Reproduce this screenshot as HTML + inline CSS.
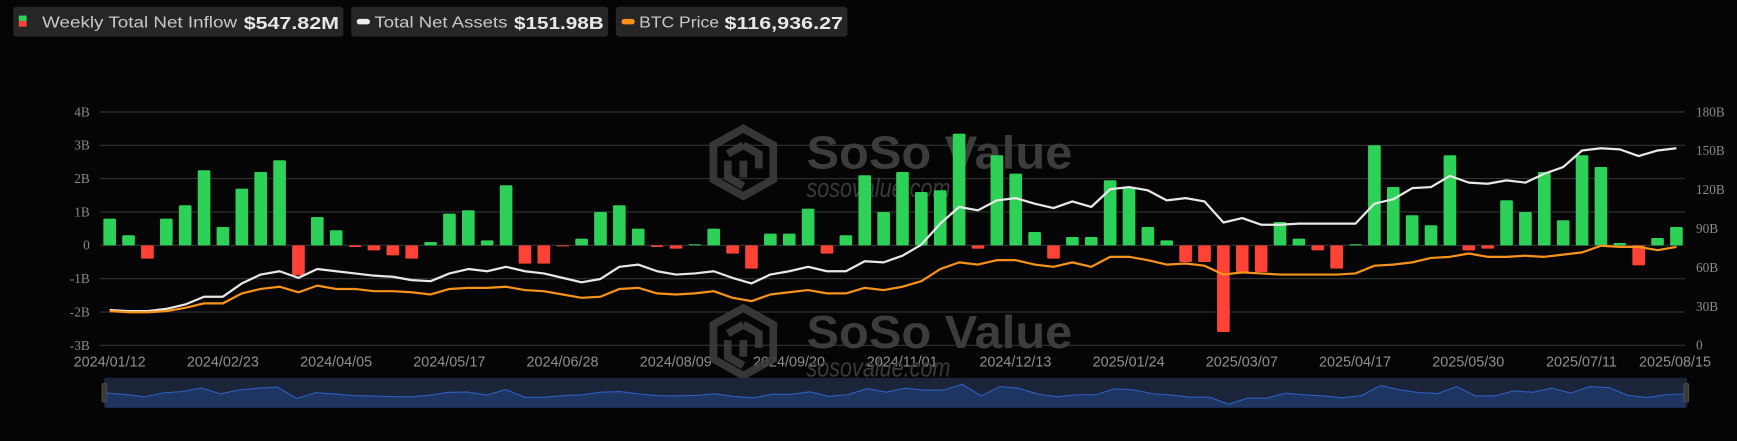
<!DOCTYPE html>
<html><head><meta charset="utf-8"><style>
html,body{margin:0;padding:0;background:#050505;width:1737px;height:441px;overflow:hidden}
svg{display:block}
</style></head><body>
<svg id="s" width="1737" height="441" viewBox="0 0 1568 398" xmlns="http://www.w3.org/2000/svg" font-family="Liberation Sans, sans-serif">
<rect width="1568" height="398" fill="#050505"/>
<rect x="12" y="6" width="298" height="27" rx="3" fill="#262626"/>
<rect x="17" y="14" width="7" height="5" fill="#2ed158"/><rect x="17" y="19" width="7" height="5" fill="#ff4236"/>
<text x="38" y="25" font-size="14" fill="#c8c8c8" textLength="176" lengthAdjust="spacingAndGlyphs">Weekly Total Net Inflow</text>
<text x="220" y="26" font-size="16" font-weight="bold" fill="#e8e8e8" textLength="86" lengthAdjust="spacingAndGlyphs">$547.82M</text>
<rect x="317" y="6" width="232" height="27" rx="3" fill="#262626"/>
<rect x="322" y="17" width="12" height="5" rx="2.5" fill="#eeeeee"/>
<text x="338" y="25" font-size="14" fill="#c8c8c8" textLength="120" lengthAdjust="spacingAndGlyphs">Total Net Assets</text>
<text x="464" y="26" font-size="16" font-weight="bold" fill="#e8e8e8" textLength="81" lengthAdjust="spacingAndGlyphs">$151.98B</text>
<rect x="556" y="6" width="209" height="27" rx="3" fill="#262626"/>
<rect x="561" y="17" width="12" height="5" rx="2.5" fill="#f7931a"/>
<text x="577" y="25" font-size="14" fill="#c8c8c8" textLength="72" lengthAdjust="spacingAndGlyphs">BTC Price</text>
<text x="654" y="26" font-size="16" font-weight="bold" fill="#e8e8e8" textLength="107" lengthAdjust="spacingAndGlyphs">$116,936.27</text>
<g id="grid"></g>
<g fill="none" stroke="#3c3c3c" stroke-width="7" opacity="0.9">
<path d="M671 116 L698 131 L698 162 L671 177 L644 162 L644 131 Z"/>
<path d="M671 131 L685 139 L685 152 M657 139 L671 131 M657 145 L657 160 L671 168 M671 145 L671 160"/>
<path d="M671 278 L698 293 L698 324 L671 339 L644 324 L644 293 Z"/>
<path d="M671 293 L685 301 L685 314 M657 301 L671 293 M657 307 L657 322 L671 330 M671 307 L671 322"/>
</g>
<text x="728" y="152" font-size="42" font-weight="bold" fill="#3c3c3c" textLength="240" lengthAdjust="spacingAndGlyphs">SoSo Value</text>
<text x="728" y="178" font-size="24" font-style="italic" fill="#3a3a3a" textLength="130" lengthAdjust="spacingAndGlyphs">sosovalue.com</text>
<text x="728" y="314" font-size="42" font-weight="bold" fill="#3c3c3c" textLength="240" lengthAdjust="spacingAndGlyphs">SoSo Value</text>
<text x="728" y="340" font-size="24" font-style="italic" fill="#3a3a3a" textLength="130" lengthAdjust="spacingAndGlyphs">sosovalue.com</text>
<g id="bars"></g>
<g id="lines"></g>
<rect x="94" y="341" width="1429" height="27" fill="#1b2438"/>
<g id="mini"></g>
<rect x="92" y="346" width="4.5" height="17" rx="1.5" fill="#3a3a3a" stroke="#555" stroke-width="0.6"/>
<rect x="1520" y="346" width="4.5" height="17" rx="1.5" fill="#3a3a3a" stroke="#555" stroke-width="0.6"/>
</svg>
<script>
const NS="http://www.w3.org/2000/svg";
function el(t,a,p,txt){const e=document.createElementNS(NS,t);for(const k in a)e.setAttribute(k,a[k]);if(txt!==undefined)e.textContent=txt;document.getElementById(p).appendChild(e);return e;}
const L=["4B","3B","2B","1B","0","-1B","-2B","-3B"],R=["180B","150B","120B","90B","60B","30B","0"];
for(let i=0;i<8;i++){const y=101+30.1*i;el("line",{x1:90,x2:1521,y1:y,y2:y,stroke:"#353535",'stroke-width':1},"grid");
el("text",{x:81,y:y+4,'font-size':12,fill:"#8a8a8a",'text-anchor':"end",'font-family':"Liberation Serif, serif"},"grid",L[i]);}
for(let i=0;i<7;i++){const y=101+35.1*i;el("text",{x:1531,y:y+4,'font-size':12,fill:"#8a8a8a",'font-family':"Liberation Serif, serif"},"grid",R[i]);}
const D=["2024/01/12","2024/02/23","2024/04/05","2024/05/17","2024/06/28","2024/08/09","2024/09/20","2024/11/01","2024/12/13","2025/01/24","2025/03/07","2025/04/17","2025/05/30","2025/07/11"];
D.forEach((d,i)=>el("text",{x:99+102.2*i,y:331,'font-size':13,fill:"#8f8f8f",'text-anchor':"middle"},"grid",d));
el("text",{x:1512,y:331,'font-size':13,fill:"#8f8f8f",'text-anchor':"middle"},"grid","2025/08/15");
const B=[0.8,0.3,-0.4,0.8,1.2,2.25,0.55,1.7,2.2,2.55,-0.9,0.85,0.45,-0.05,-0.15,-0.3,-0.4,0.1,0.95,1.05,0.15,1.8,-0.55,-0.55,-0.02,0.2,1.0,1.2,0.5,-0.05,-0.1,0.02,0.5,-0.25,-0.7,0.35,0.35,1.1,-0.25,0.3,2.1,1.0,2.2,1.6,1.65,3.35,-0.1,2.7,2.15,0.4,-0.4,0.25,0.25,1.95,1.75,0.55,0.15,-0.5,-0.5,-2.6,-0.8,-0.8,0.7,0.2,-0.15,-0.7,0.01,3.0,1.75,0.9,0.6,2.7,-0.15,-0.1,1.35,1.0,2.2,0.75,2.7,2.35,0.07,-0.6,0.22,0.55];
const Z=221.4;
B.forEach((v,i)=>{const x=99+17.04*i-5.7,h=Math.max(1,Math.abs(v)*30.1);el("rect",{x:x,y:v>=0?Z-h:Z,width:11.4,height:h,rx:1.2,fill:v>=0?"#2ed158":"#ff4236"},"bars");});
const W=[279,280,280,278,274,267,267,255,247,244,250,242,244,246,248,249,252,253,246,242,244,240,244,246,250,254,251,240,238,244,247,246,244,250,255,247,244,240,244,244,235,236,230,220,201,186,189,180,178,183,187,181,186,170,168,171,180,178,181,200,196,202,202,201,201,201,201,183,179,169,168,158,164,165,162,164,156,150,135,133,134,140,135,133];
const O=[280,281,281,280,277,273,273,264,260,258,263,257,260,260,262,262,263,265,260,259,259,258,261,262,265,268,267,260,259,264,265,264,262,268,271,265,263,261,264,264,259,261,258,253,242,236,238,234,234,238,240,236,240,231,231,234,238,237,239,247,245,246,247,247,247,247,246,239,238,236,232,231,228,231,231,230,231,229,227,221,222,222,225,222];
const pts=a=>a.map((y,i)=>(99+17.04*i).toFixed(1)+","+(y+0.8)).join(" ");
el("polyline",{points:pts(W),fill:"none",stroke:"#e8e8e8",'stroke-width':2,'stroke-linejoin':"round"},"lines");
el("polyline",{points:pts(O),fill:"none",stroke:"#f7931a",'stroke-width':2,'stroke-linejoin':"round"},"lines");
const mp=B.map((v,i)=>{const x=96+1425*i/83;return [x,357-v*3.0];});
let d="M96,368 "+mp.map(p=>"L"+p[0].toFixed(1)+","+p[1].toFixed(1)).join(" ")+" L1521,368 Z";
el("path",{d:d,fill:"#1e3461"},"mini");
el("polyline",{points:mp.map(p=>p[0].toFixed(1)+","+p[1].toFixed(1)).join(" "),fill:"none",stroke:"#2c5fc0",'stroke-width':1},"mini");
</script>
</body></html>
